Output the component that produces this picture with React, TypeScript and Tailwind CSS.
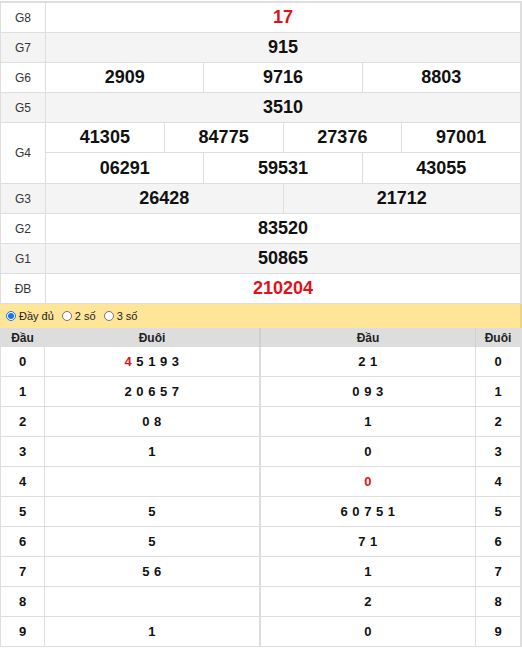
import React from "react";

type Prize = { label: string; rows: string[][]; red?: boolean; shade?: boolean };

const prizes: Prize[] = [
  { label: "G8", rows: [["17"]], red: true },
  { label: "G7", rows: [["915"]], shade: true },
  { label: "G6", rows: [["2909", "9716", "8803"]] },
  { label: "G5", rows: [["3510"]], shade: true },
  { label: "G4", rows: [["41305", "84775", "27376", "97001"], ["06291", "59531", "43055"]] },
  { label: "G3", rows: [["26428", "21712"]], shade: true },
  { label: "G2", rows: [["83520"]] },
  { label: "G1", rows: [["50865"]], shade: true },
  { label: "ĐB", rows: [["210204"]], red: true },
];

// đầu / đuôi lists
const loto: { tail: string[]; head: string[] }[] = [
  { tail: ["4", "5", "1", "9", "3"], head: ["2", "1"] },
  { tail: ["2", "0", "6", "5", "7"], head: ["0", "9", "3"] },
  { tail: ["0", "8"], head: ["1"] },
  { tail: ["1"], head: ["0"] },
  { tail: [], head: ["0"] },
  { tail: ["5"], head: ["6", "0", "7", "5", "1"] },
  { tail: ["5"], head: ["7", "1"] },
  { tail: ["5", "6"], head: ["1"] },
  { tail: [], head: ["2"] },
  { tail: ["1"], head: ["0"] },
];

function Digits({ items, hiFirst, hiAll }: { items: string[]; hiFirst?: boolean; hiAll?: boolean }) {
  return (
    <span className="tracking-[0.5px]">
      {items.map((d, i) => (
        <span key={i} className={(hiFirst && i === 0) || hiAll ? "text-[#e3101a]" : ""}>
          {d}
          {i < items.length - 1 ? " " : ""}
        </span>
      ))}
    </span>
  );
}

function PrizeRow({ prize }: { prize: Prize }) {
  const bg = prize.shade ? "bg-[#f4f4f4]" : "bg-white";
  const multi = prize.rows.length > 1;
  return (
    <div className={`flex border-b border-[#dedede] ${bg}`}>
      <div className="flex w-[45px] shrink-0 items-center justify-center border-r border-[#dedede] text-[12px] text-[#333]">
        {prize.label}
      </div>
      <div className="flex flex-1 flex-col">
        {prize.rows.map((row, ri) => (
          <div
            key={ri}
            className={`flex ${multi ? "h-[30px]" : "h-[29px]"} ${
              ri < prize.rows.length - 1 ? "border-b border-[#dedede]" : ""
            }`}
          >
            {row.map((n, ci) => (
              <div
                key={ci}
                className={`flex flex-1 items-center justify-center text-[18px] font-bold ${
                  prize.red ? "text-[#e3101a]" : "text-[#111]"
                } ${ci < row.length - 1 ? "border-r border-[#dedede]" : ""}`}
              >
                {n}
              </div>
            ))}
          </div>
        ))}
      </div>
    </div>
  );
}

function Radio({ checked, label }: { checked?: boolean; label: string }) {
  return (
    <label className="flex items-center gap-[3px] text-[11px] text-[#222]">
      <span
        className={`flex h-[10px] w-[10px] items-center justify-center rounded-full border ${
          checked ? "border-[#1a73e8] bg-white" : "border-[#767676] bg-white"
        }`}
      >
        {checked && <span className="h-[6px] w-[6px] rounded-full bg-[#1a73e8]" />}
      </span>
      {label}
    </label>
  );
}

export default function App() {
  return (
    <div className="w-[522px] bg-white pt-[1px]" style={{ fontFamily: '"Liberation Sans", Arial, sans-serif' }}>
      <div className="border-l border-r-2 border-t-2 border-[#dedede]">
        {prizes.map((p) => (
          <PrizeRow key={p.label} prize={p} />
        ))}
      </div>

      <div className="flex h-[24px] items-center gap-[8px] border-r-2 border-[#e8d38a] bg-[#ffe597] pl-[6px]">
        <Radio checked label="Đầy đủ" />
        <Radio label="2 số" />
        <Radio label="3 số" />
      </div>

      <div className="flex h-[19px] border-r-2 border-[#dedede] bg-[#dddddd] text-[12px] font-bold text-[#222]">
        <div className="flex w-[45px] items-center justify-center">Đầu</div>
        <div className="flex w-[216px] items-center justify-center border-r-2 border-[#d0d0d0]">Đuôi</div>
        <div className="flex w-[215px] items-center justify-center border-r border-[#d0d0d0]">Đầu</div>
        <div className="flex flex-1 items-center justify-center">Đuôi</div>
      </div>

      <div className="border-l border-r-2 border-[#dedede]">
        {loto.map((r, i) => (
          <div key={i} className="flex h-[30px] border-b border-[#dedede] text-[13px] font-bold text-[#111]">
            <div className="flex w-[44px] items-center justify-center border-r border-[#dedede]">{i}</div>
            <div className="flex w-[216px] items-center justify-center border-r-2 border-[#dedede]">
              <Digits items={r.tail} hiFirst={i === 0} />
            </div>
            <div className="flex w-[215px] items-center justify-center border-r border-[#dedede]">
              <Digits items={r.head} hiAll={i === 4} />
            </div>
            <div className="flex flex-1 items-center justify-center">{i}</div>
          </div>
        ))}
      </div>
    </div>
  );
}
